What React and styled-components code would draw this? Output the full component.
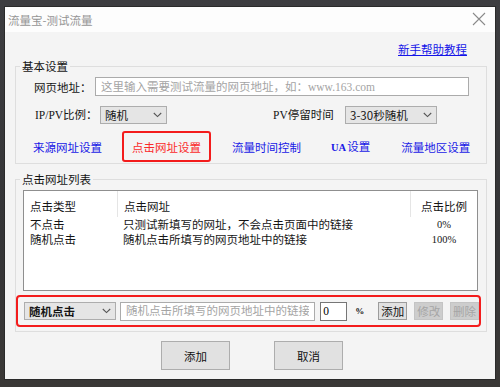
import React from 'react';
import styled, { createGlobalStyle } from 'styled-components';

const CJK = `"Noto Sans CJK SC", sans-serif`;
const SERIF_CJK = `"Liberation Serif", "Noto Sans CJK SC", serif`;

const GlobalStyle = createGlobalStyle`
  html, body {
    margin: 0;
    padding: 0;
    background: #3a3a3c;
  }
  body {
    font-family: ${CJK};
    font-size: 11.5px;
    color: #151515;
  }
`;

const Chevron = () => (
  <svg width="9" height="6" viewBox="0 0 9 6">
    <path d="M0.8 1 L4.5 4.6 L8.2 1" fill="none" stroke="#555" strokeWidth="1.1" />
  </svg>
);

const CloseIcon = () => (
  <svg width="14" height="14" viewBox="0 0 14 14">
    <path d="M1 1 L13 13 M13 1 L1 13" stroke="#8a8a8a" strokeWidth="1.1" />
  </svg>
);

export default function App() {
  const rows = [
    { type: '不点击', url: '只测试新填写的网址，不会点击页面中的链接', ratio: '0%' },
    { type: '随机点击', url: '随机点击所填写的网页地址中的链接', ratio: '100%' },
  ];

  return (
    <>
      <GlobalStyle />
      <Desktop>
        <Window>
          <TitleBar>
            <span>流量宝-测试流量</span>
            <CloseIcon />
          </TitleBar>
          <Body>
            <HelpRow>
              <HelpLink>新手帮助教程</HelpLink>
            </HelpRow>

            <Group>
              <Legend>基本设置</Legend>
              <Row $top={4}>
                <Label $width={61} $indent={18}>网页地址：</Label>
                <TextInput
                  $width={374}
                  placeholder="这里输入需要测试流量的网页地址，如：www.163.com"
                />
              </Row>
              <Row $top={10}>
                <Label $width={65} $indent={19} $serif>IP/PV比例：</Label>
                <Dropdown $width={67}>
                  <span>随机</span>
                  <Chevron />
                </Dropdown>
                <Label $width={72} $indent={106} $serif>PV停留时间</Label>
                <Dropdown $width={92}>
                  <span>3-30秒随机</span>
                  <Chevron />
                </Dropdown>
              </Row>
              <Row $top={7}>
                <NavLink $gap={17}>来源网址设置</NavLink>
                <ActiveBox>
                  <NavLink $active>点击网址设置</NavLink>
                </ActiveBox>
                <NavLink $gap={21}>流量时间控制</NavLink>
                <NavLink $gap={30}><Latin>UA</Latin>设置</NavLink>
                <NavLink $gap={31}>流量地区设置</NavLink>
              </Row>
            </Group>

            <Group $top={8}>
              <Legend>点击网址列表</Legend>
              <ListBox>
                <ListHead>
                  <HeadCell>点击类型</HeadCell>
                  <HeadCell $sep>点击网址</HeadCell>
                  <HeadCell $sep $center>点击比例</HeadCell>
                </ListHead>
                {rows.map((r) => (
                  <ListRow key={r.type}>
                    <Cell>{r.type}</Cell>
                    <Cell $pad={5}>{r.url}</Cell>
                    <Cell $center $serif>{r.ratio}</Cell>
                  </ListRow>
                ))}
              </ListBox>
              <EditBox>
                <Dropdown $width={92} $bold>
                  <span>随机点击</span>
                  <Chevron />
                </Dropdown>
                <TextInput $width={203} $ml={4} placeholder="随机点击所填写的网页地址中的链接" />
                <RatioInput defaultValue="0" />
                <Percent>%</Percent>
                <SmallButton $ml={14}>添加</SmallButton>
                <SmallButton $ml={7} disabled>修改</SmallButton>
                <SmallButton $ml={7} disabled>删除</SmallButton>
              </EditBox>
            </Group>

            <Actions>
              <DialogButton>添加</DialogButton>
              <DialogButton>取消</DialogButton>
            </Actions>
          </Body>
        </Window>
      </Desktop>
    </>
  );
}

const Desktop = styled.div`
  width: 500px;
  height: 387px;
  box-sizing: border-box;
  padding: 7px 5px 0 5px;
  background: linear-gradient(180deg, #3d3d40 0%, #343436 60%, #3a3836 100%);
  overflow: hidden;
`;

const Window = styled.div`
  width: 490px;
  height: 372px;
  display: flex;
  flex-direction: column;
  background: #f4f4f4;
  box-shadow: 0 0 0 1px #2a2a2a;
`;

const TitleBar = styled.div`
  height: 25px;
  flex: none;
  display: flex;
  align-items: center;
  justify-content: space-between;
  padding: 0 9px 0 3px;
  background: #fdfdfd;
  color: #959595;
  font-size: 11.5px;
  line-height: 14px;
  svg { margin-top: -2px; }
`;

const Body = styled.div`
  display: flex;
  flex-direction: column;
  padding: 0 8px 0 10px;
`;

const HelpRow = styled.div`
  display: flex;
  justify-content: flex-end;
  padding-right: 20px;
  margin-top: 10px;
`;

const HelpLink = styled.a`
  color: #1414e8;
  text-decoration: underline;
  line-height: 14px;
  cursor: pointer;
`;

const Group = styled.fieldset`
  margin: ${(p) => p.$top ?? 3}px 0 0;
  padding: 0 0 1px;
  min-width: 0;
  border: 1px solid #dedede;
`;

const Legend = styled.legend`
  margin-left: 4px;
  padding: 0 2px;
  line-height: 14px;
  color: #151515;
`;

const Row = styled.div`
  display: flex;
  align-items: center;
  margin-top: ${(p) => p.$top}px;
`;

const Label = styled.span`
  flex: none;
  width: ${(p) => p.$width}px;
  margin-left: ${(p) => p.$indent}px;
  line-height: 14px;
  font-family: ${(p) => (p.$serif ? SERIF_CJK : CJK)};
  white-space: nowrap;
`;

const TextInput = styled.input`
  box-sizing: border-box;
  width: ${(p) => p.$width}px;
  height: 19px;
  margin-left: ${(p) => p.$ml ?? 0}px;
  padding: 0 5px;
  border: 1px solid #ababab;
  background: #fff;
  font-family: ${SERIF_CJK};
  font-size: 11.5px;
  outline: none;
  &::placeholder {
    color: #a4a4a4;
  }
`;

const Dropdown = styled.div`
  box-sizing: border-box;
  flex: none;
  width: ${(p) => p.$width}px;
  height: 18px;
  display: flex;
  align-items: center;
  justify-content: space-between;
  padding: 0 4px 0 4px;
  border: 1px solid #adadad;
  background: #e5e5e5;
  line-height: 14px;
  font-weight: ${(p) => (p.$bold ? 600 : 400)};
`;

const ActiveBox = styled.div`
  box-sizing: border-box;
  height: 31px;
  margin-left: 20px;
  padding: 0 8px;
  display: flex;
  align-items: center;
  border: 2px solid #f31c1c;
  border-radius: 3px;
`;

const NavLink = styled.span`
  margin-left: ${(p) => p.$gap ?? 0}px;
  color: ${(p) => (p.$active ? '#fa2a2a' : '#1818e6')};
  line-height: 14px;
  cursor: pointer;
`;

const Latin = styled.span`
  font-family: ${SERIF_CJK};
  font-size: 10.5px;
  font-weight: 700;
  margin-right: 1px;
`;

const ListBox = styled.div`
  box-sizing: border-box;
  height: 101px;
  margin: 4px 8px 0 7px;
  border: 1px solid #8f8f8f;
  background: #fff;
`;

const ListHead = styled.div`
  display: grid;
  grid-template-columns: 93px 293px 1fr;
  height: 26px;
`;

const HeadCell = styled.div`
  display: flex;
  align-items: center;
  justify-content: ${(p) => (p.$center ? 'center' : 'flex-start')};
  padding: ${(p) => (p.$center ? '3px 0 0 0' : '3px 0 0 6px')};
  border-left: ${(p) => (p.$sep ? '1px solid #e5e5e5' : 'none')};
  line-height: 14px;
`;

const ListRow = styled.div`
  display: grid;
  grid-template-columns: 94px 293px 1fr;
  height: 15px;
  align-items: center;
`;

const Cell = styled.div`
  padding-left: ${(p) => (p.$center ? 0 : p.$pad ?? 6)}px;
  text-align: ${(p) => (p.$center ? 'center' : 'left')};
  font-family: ${(p) => (p.$serif ? SERIF_CJK : CJK)};
  font-size: ${(p) => (p.$serif ? 10.5 : 11.5)}px;
  line-height: 15px;
  white-space: nowrap;
`;

const EditBox = styled.div`
  box-sizing: border-box;
  height: 32px;
  margin: 4px 5px 3px 0;
  padding: 0 0 0 6px;
  display: flex;
  align-items: center;
  border: 2px solid #f31c1c;
  border-radius: 4px;
`;

const RatioInput = styled.input`
  box-sizing: border-box;
  width: 27px;
  height: 19px;
  margin-left: 5px;
  padding: 0 2px;
  border: 1px solid #767676;
  background: #fff;
  font-family: ${SERIF_CJK};
  font-size: 11.5px;
  outline: none;
`;

const Percent = styled.span`
  margin-left: 8px;
  font-family: ${SERIF_CJK};
  font-size: 9px;
  font-weight: 700;
`;

const SmallButton = styled.button`
  box-sizing: border-box;
  width: 30px;
  height: 18px;
  margin-left: ${(p) => p.$ml}px;
  padding: 0;
  border: 1px solid ${(p) => (p.disabled ? '#c4c4c4' : '#9c9c9c')};
  background: ${(p) => (p.disabled ? '#cdcdcd' : '#e1e1e1')};
  color: ${(p) => (p.disabled ? '#a5a5a5' : '#111')};
  font-family: ${CJK};
  font-size: 11.5px;
  line-height: 14px;
`;

const Actions = styled.div`
  display: flex;
  justify-content: center;
  gap: 44px;
  margin-top: 9px;
  padding-left: 2px;
`;

const DialogButton = styled.button`
  box-sizing: border-box;
  width: 69px;
  height: 29px;
  padding: 0;
  border: 1px solid #adadad;
  background: #e1e1e1;
  color: #111;
  font-family: ${CJK};
  font-size: 11.5px;
`;
